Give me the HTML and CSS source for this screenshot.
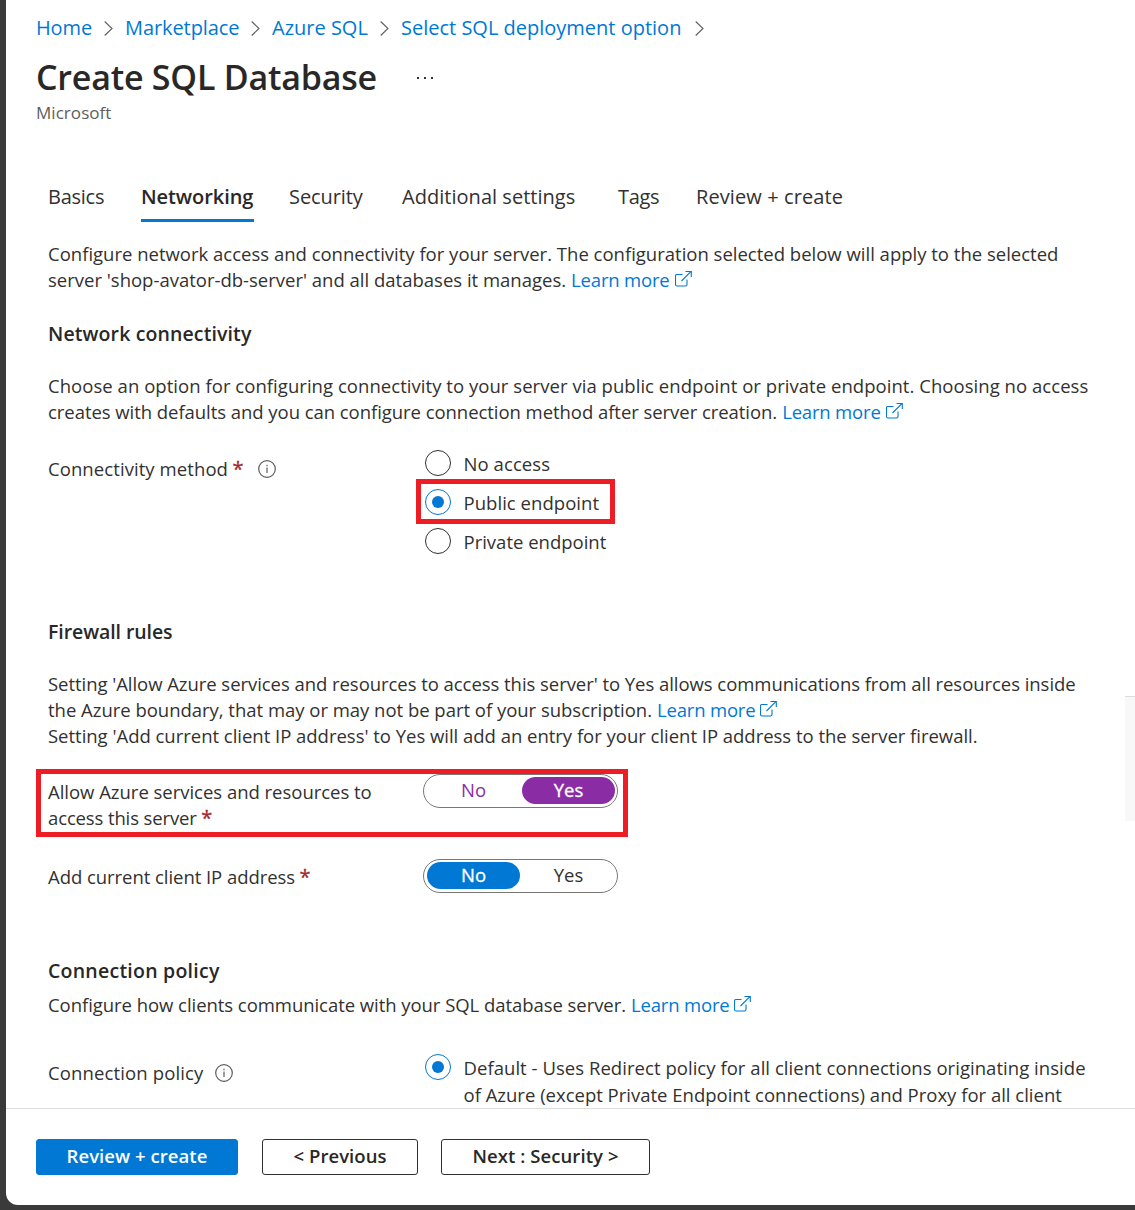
FILE: index.html
```
<!DOCTYPE html>
<html lang="en">
<head>
<meta charset="utf-8">
<title>Create SQL Database</title>
<link rel="stylesheet" href="styles.css">
</head>
<body>
<svg class="defs" width="0" height="0" aria-hidden="true">
  <symbol id="external" viewBox="0 0 17 17"><path d="M7.500 3.500H2Q.5 3.500.5 5V13.500Q.5 15 2 15H10.500Q12 15 12 13.500V8.500M6.500 10 15.800.700M10.500.500H16.300V6"/></symbol>
  <symbol id="info" viewBox="0 0 18 18"><circle cx="9" cy="9" r="8.300"/><path d="M9 7.500V13M9 4.700V6.200"/></symbol>
  <symbol id="chevron" viewBox="0 0 9 15"><path d="M.7.500 8 7.500.700 14.500"/></symbol>
</svg>
<main class="panel">
  <div class="content">
    <nav class="breadcrumb">
      <a class="crumb crumb-home">Home</a><svg class="chevron"><use href="#chevron"/></svg>
      <a class="crumb crumb-market">Marketplace</a><svg class="chevron"><use href="#chevron"/></svg>
      <a class="crumb crumb-sql">Azure SQL</a><svg class="chevron"><use href="#chevron"/></svg>
      <a class="crumb crumb-option">Select SQL deployment option</a><svg class="chevron"><use href="#chevron"/></svg>
    </nav>
    <header class="title-row">
      <h1>Create SQL Database</h1>
      <div class="more"><i></i><i></i><i></i></div>
    </header>
    <div class="publisher">Microsoft</div>

    <div class="tabs">
      <span class="tab tab-basics">Basics</span>
      <span class="tab tab-network active">Networking</span>
      <span class="tab tab-security">Security</span>
      <span class="tab tab-additional">Additional settings</span>
      <span class="tab tab-tags">Tags</span>
      <span class="tab tab-review">Review + create</span>
    </div>

    <section class="body">
      <div class="copy intro">
        <div class="line">Configure network access and connectivity for your server. The configuration selected below will apply to the selected</div>
        <div class="line"><span>server 'shop-avator-db-server' and all databases it manages.</span><a class="learn">Learn more</a><svg class="external"><use href="#external"/></svg></div>
      </div>

      <h2 class="h-network">Network connectivity</h2>
      <div class="copy network-copy">
        <div class="line ls-4">Choose an option for configuring connectivity to your server via public endpoint or private endpoint. Choosing no access</div>
        <div class="line"><span class="ls-n5">creates with defaults and you can configure connection method after server creation.</span><a class="learn">Learn more</a><svg class="external"><use href="#external"/></svg></div>
      </div>

      <div class="field method">
        <div class="label"><span class="wide-0">Connectivity method</span><b class="star">*</b><svg class="info"><use href="#info"/></svg></div>
        <div class="radios">
          <div class="radio"><span class="dot"></span><span class="wide-0">No access</span></div>
          <div class="radio checked"><span class="dot"></span><span class="ls-4">Public endpoint</span><span class="highlight endpoint-mark"></span></div>
          <div class="radio"><span class="dot"></span><span>Private endpoint</span></div>
        </div>
      </div>

      <h2 class="h-firewall">Firewall rules</h2>
      <div class="copy firewall-copy">
        <div class="line ls-n5">Setting 'Allow Azure services and resources to access this server' to Yes allows communications from all resources inside</div>
        <div class="line"><span class="ls-n2">the Azure boundary, that may or may not be part of your subscription.</span><a class="learn">Learn more</a><svg class="external"><use href="#external"/></svg></div>
        <div class="line ls-n2">Setting 'Add current client IP address' to Yes will add an entry for your client IP address to the server firewall.</div>
      </div>

      <div class="field allow">
        <div class="label two-line"><div class="ls-n2">Allow Azure services and resources to</div><div><span class="tight">access this server</span><b class="star">*</b></div></div>
        <div class="toggle purple"><span>No</span><span class="on">Yes</span></div>
        <span class="highlight allow-mark"></span>
      </div>
      <div class="field client-ip">
        <div class="label"><span class="ls-n5">Add current client IP address</span><b class="star">*</b></div>
        <div class="toggle"><span class="on">No</span><span>Yes</span></div>
      </div>

      <h2 class="h-policy">Connection policy</h2>
      <div class="copy policy-copy">
        <div class="line"><span class="ls-n5">Configure how clients communicate with your SQL database server.</span><a class="learn">Learn more</a><svg class="external"><use href="#external"/></svg></div>
      </div>
      <div class="field policy">
        <div class="label"><span class="wide-1">Connection policy</span><svg class="info policy-info"><use href="#info"/></svg></div>
        <div class="radio checked policy-radio"><span class="dot"></span><div><div class="ls-4">Default - Uses Redirect policy for all client connections originating inside</div><div>of Azure (except Private Endpoint connections) and Proxy for all client</div></div></div>
      </div>
    </section>
    <span class="scroll-thumb"></span>
  </div>
  <footer class="actions">
    <button class="btn primary">Review + create</button>
    <button class="btn previous">&lt; Previous</button>
    <button class="btn next">Next : Security &gt;</button>
  </footer>
</main>
</body>
</html>
```
FILE: styles.css
```
* { box-sizing: border-box; }
body {
  margin: 0;
  height: 1210px;
  overflow: hidden;
  background: #3a3a3a;
  color: #323130;
  font: 18.5px/26px "Open Sans", "Noto Sans", sans-serif;
}
.defs { position: absolute; }
svg { fill: none; flex: none; }

.panel {
  height: 1205px;
  margin-left: 6px;
  background: #fff;
  border-bottom-left-radius: 12px;
  display: flex;
  flex-direction: column;
}
.content {
  position: relative;
  height: 1108px;
  overflow: hidden;
  padding-left: 30px;
  white-space: nowrap;
}

.breadcrumb { display: flex; align-items: center; height: 28px; margin-top: 14px; font-size: 20px; }
.crumb { color: #0078d4; flex: none; }
.crumb-home { width: 68px; letter-spacing: -0.13px; }
.crumb-market { width: 126px; letter-spacing: -0.08px; }
.crumb-sql { width: 108px; }
.crumb-option { width: 294px; }
.chevron { width: 9px; height: 15px; margin-right: 12px; stroke: #605e5c; stroke-width: 1.1; }

.title-row { display: flex; height: 48px; margin-top: 12px; }
h1 { margin: -1px 0 0; width: 381px; font-size: 34px; font-weight: 600; line-height: 48px; letter-spacing: -0.22px; color: #292827; }
.more { display: flex; gap: 5px; padding-top: 23px; }
.more i { width: 2px; height: 2px; background: #323130; }
.publisher { height: 24px; line-height: 24px; font-size: 17px; letter-spacing: 0.05px; color: #605e5c; margin-top: -1px; }

.tabs { display: flex; height: 41px; margin-top: 56px; padding-left: 12px; font-size: 20px; line-height: 32px; }
.tab { flex: none; }
.tab-basics { width: 93px; letter-spacing: -0.25px; }
.tab-network { width: 113px; margin-right: 35px; letter-spacing: -0.08px; }
.tab-security { width: 113px; letter-spacing: -0.08px; }
.tab-additional { width: 216px; letter-spacing: 0.03px; }
.tab-tags { width: 78px; letter-spacing: -0.3px; }
.tab-review { letter-spacing: 0.1px; }
.active { font-weight: 600; color: #292827; border-bottom: 3px solid #0078d4; }

.body { padding-left: 12px; }
.copy { height: 52px; }
.line { display: flex; align-items: center; height: 26px; }
.learn { color: #0078d4; margin-left: 5px; letter-spacing: -0.18px; }
.external { width: 17px; height: 17px; margin: -2px 0 0 5px; stroke: #0078d4; stroke-width: 1.1; }
.intro { margin-top: 19px; }
h2 { margin: 0; height: 26px; font-size: 19.5px; line-height: 26px; font-weight: 600; color: #292827; }
.h-network { margin-top: 28px; letter-spacing: 0.12px; }
.network-copy { margin-top: 26px; }
.h-firewall { margin-top: 58px; letter-spacing: -0.08px; }
.firewall-copy { margin-top: 26px; height: 78px; }
.h-policy { margin-top: 65px; letter-spacing: 0.24px; }
.policy-copy { margin-top: 8px; height: 26px; }

.ls-4 { letter-spacing: 0.045px; }
.ls-n2 { letter-spacing: -0.02px; }
.ls-n5 { letter-spacing: -0.05px; }
.tight { letter-spacing: -0.13px; }
.wide-0 { letter-spacing: 0.08px; }
.wide-1 { letter-spacing: 0.135px; }

.field { display: flex; position: relative; }
.label { display: flex; align-items: center; width: 375px; height: 26px; flex: none; }
.two-line { display: block; height: 52px; }
.star { color: #a4262c; font-weight: 400; font-size: 20px; line-height: 20px; margin-left: 4.500px; -webkit-text-stroke: 0.3px #a4262c; }
.info { width: 18px; height: 18px; margin: -1px 0 0 14px; stroke: #605e5c; stroke-width: 1.2; }
.policy-info { margin-left: 12px; }
.method { margin-top: 19px; height: 117px; }
.method .label { margin-top: 12px; }
.radio { position: relative; display: flex; align-items: center; height: 39px; padding-left: 2px; }
.dot {
  width: 26px; height: 26px; margin-right: 12.500px; flex: none;
  border: 1.300px solid #323130; border-radius: 50%;
  display: grid; place-items: center;
}
.radio .dot { margin-top: -1px; }
.checked .dot { border-color: #0078d4; }
.checked .dot::before { content: ""; width: 12px; height: 12px; border-radius: 50%; background: #0078d4; }
.highlight { position: absolute; border: 5px solid #ee1c24; }
.endpoint-mark { left: -7px; top: -4px; width: 199px; height: 45px; }

.allow { margin-top: 25px; height: 59px; }
.allow .label { margin-top: 5px; }
.allow-mark { left: -12px; top: -5px; width: 592px; height: 68px; }
.toggle {
  display: flex; justify-content: space-between; width: 195px; height: 34px; padding: 2px 2px 2px 3px;
  border: 1px solid #7a7876; border-radius: 17px; line-height: 26px;
}
.toggle span { width: 93px; height: 27px; border-radius: 14px; text-align: center; }
.toggle .on { background: #0078d4; color: #fff; -webkit-text-stroke: 0.3px #fff; }
.purple { color: #8a2da5; }
.toggle.purple .on { background: #8a2da5; }
.client-ip { margin-top: 26px; height: 34px; }
.client-ip .label { margin-top: 5px; }
.policy { margin-top: 37px; }
.policy .label { margin-top: 5px; }
.policy-radio { height: 54px; line-height: 27px; align-items: flex-start; }
.policy-radio > div { margin-top: -1px; }

.scroll-thumb { position: absolute; right: 0; top: 696px; width: 10px; height: 125px; background: #f8f8f8; border-top: 1px solid #d9dde2; }

.actions { display: flex; height: 97px; padding: 30px 0 0 30px; border-top: 1px solid #dcdcdc; }
.btn {
  height: 36px; padding: 0 0 2px; border: 1px solid #323130; border-radius: 3px; background: #fff; color: #292827;
  font: 600 18.5px/26px "Open Sans", "Noto Sans", sans-serif;
}
.primary { width: 202px; margin-right: 24px; background: #0078d4; border-color: #0078d4; color: #fff; letter-spacing: 0.06px; }
.previous { width: 156px; margin-right: 23px; letter-spacing: 0.05px; }
.next { width: 209px; letter-spacing: 0.08px; }
```
